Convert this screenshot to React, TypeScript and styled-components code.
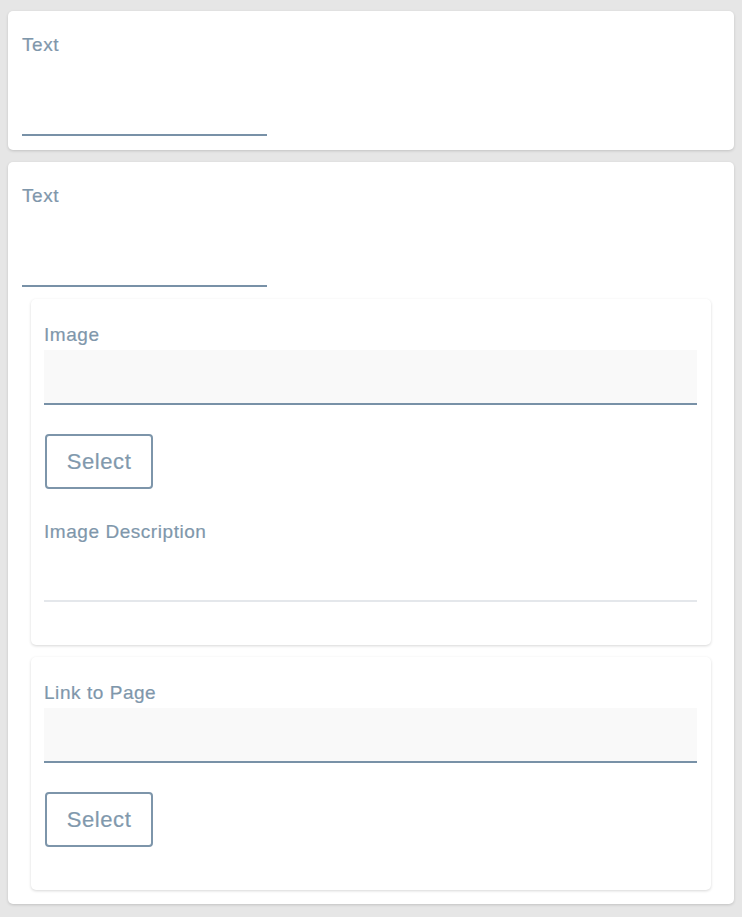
import styled, { createGlobalStyle } from "styled-components";

const GlobalStyle = createGlobalStyle`
  html, body {
    margin: 0;
    background: #e6e6e6;
  }
  body {
    font-family: "Liberation Sans", Arial, sans-serif;
  }
`;

const Page = styled.div`
  display: flex;
  flex-direction: column;
  gap: 12px;
  padding: 11px 8px 14px;
`;

const Card = styled.div<{ $nested?: boolean }>`
  display: flex;
  flex-direction: column;
  background: #ffffff;
  border-radius: 5px;
  box-shadow: 0 1px 3px rgba(0, 0, 0, 0.16);
  padding: ${(p) => (p.$nested ? "25px 14px 43px 13px" : "23px 14px 14px")};
  margin: ${(p) => (p.$nested ? "0 9px" : "0")};
`;

const NestedList = styled.div`
  display: flex;
  flex-direction: column;
  gap: 12px;
  margin-top: 12px;
`;

const Label = styled.label`
  display: block;
  font-size: 19px;
  line-height: 22px;
  letter-spacing: 0.55px;
  color: #7f97ab;
  -webkit-text-stroke: 0.2px #7f97ab;
`;

const TextArea = styled.div`
  width: 245px;
  height: 78px;
  border-bottom: 2.5px solid #7891a7;
`;

const Input = styled.div<{ $filled?: boolean; $muted?: boolean }>`
  margin-top: 4px;
  height: 53px;
  background: ${(p) => (p.$filled ? "#f9f9f9" : "transparent")};
  border-bottom: 2.5px solid ${(p) => (p.$muted ? "#e4e7eb" : "#7891a7")};
`;

const SelectButton = styled.button<{ $last?: boolean }>`
  align-self: flex-start;
  margin: 29px 0 ${(p) => (p.$last ? "0" : "32px")} 1px;
  width: 108px;
  height: 55px;
  border: 2px solid #7d95aa;
  border-radius: 4px;
  background: #ffffff;
  color: #8199ad;
  font-family: "Liberation Sans", Arial, sans-serif;
  font-size: 22px;
  letter-spacing: 0.6px;
  -webkit-text-stroke: 0.2px #8199ad;
  padding: 0;
  cursor: pointer;
`;

export default function App() {
  return (
    <>
      <GlobalStyle />
      <Page>
        <Card>
          <Label>Text</Label>
          <TextArea />
        </Card>
        <Card>
          <Label>Text</Label>
          <TextArea />
          <NestedList>
            <Card $nested>
              <Label>Image</Label>
              <Input $filled />
              <SelectButton>Select</SelectButton>
              <Label>Image Description</Label>
              <Input $muted />
            </Card>
            <Card $nested>
              <Label>Link to Page</Label>
              <Input $filled />
              <SelectButton $last>Select</SelectButton>
            </Card>
          </NestedList>
        </Card>
      </Page>
    </>
  );
}
